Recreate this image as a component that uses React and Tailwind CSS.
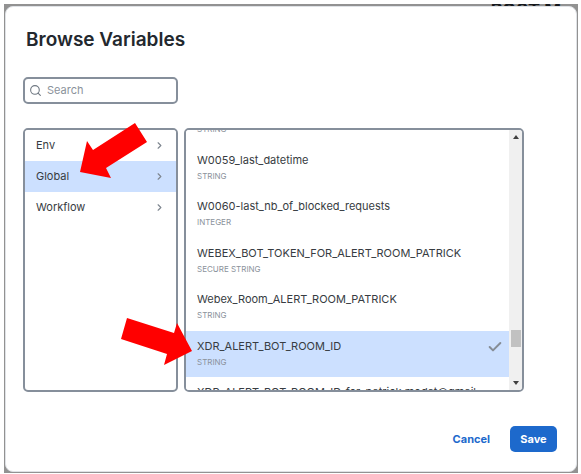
import { ChevronRight, Check, Search } from "lucide-react";

const scopes = [
  { name: "Env" },
  { name: "Global", selected: true },
  { name: "Workflow" },
];

const variables = [
  { name: "", type: "STRING" },
  { name: "W0059_last_datetime", type: "STRING" },
  { name: "W0060-last_nb_of_blocked_requests", type: "INTEGER" },
  { name: "WEBEX_BOT_TOKEN_FOR_ALERT_ROOM_PATRICK", type: "SECURE STRING" },
  { name: "Webex_Room_ALERT_ROOM_PATRICK", type: "STRING" },
  { name: "XDR_ALERT_BOT_ROOM_ID", type: "STRING", selected: true },
  { name: "XDR_ALERT_BOT_ROOM_ID_for_patrick.modat@gmail", type: "" },
];

function ScopeRow({ name, selected }) {
  return (
    <li>
      <button
        type="button"
        className={`flex h-[31px] w-full items-center justify-between px-[11px] text-[11px] text-[#373c42] ${
          selected ? "bg-[#cce0ff]" : "bg-white"
        }`}
      >
        {name}
        <ChevronRight size={11} strokeWidth={2.5} className="text-[#7e868f]" />
      </button>
    </li>
  );
}

function VariableRow({ name, type, selected }) {
  return (
    <li className="min-h-0">
      <button
        type="button"
        className={`flex h-full w-full items-start justify-between pt-2 pr-[6px] pl-[11px] text-left ${
          selected ? "bg-[#cce0ff]" : "bg-white"
        }`}
      >
        <span className="flex flex-col gap-[3px] whitespace-nowrap">
          <span className="min-h-[15px] text-[11px] leading-[15px] text-[#373c42]">{name}</span>
          <span className="text-[8px] leading-[10px] text-[#8b929b]">{type}</span>
        </span>
        {selected && <Check size={16} strokeWidth={3} className="text-[#868d96]" />}
      </button>
    </li>
  );
}

function ScrollBar() {
  return (
    <div className="flex w-[13px] shrink-0 flex-col items-center bg-[#f0f0f0] py-[5px]">
      <svg width="6" height="4" viewBox="0 0 6 4" fill="#404040">
        <path d="M0 4 3 0 6 4z" />
      </svg>
      <div className="grow" />
      <div className="h-[17px] w-[10px] bg-[#c1c1c1]" />
      <div className="h-[34px]" />
      <svg width="6" height="4" viewBox="0 0 6 4" fill="#404040">
        <path d="M0 0h6L3 4z" />
      </svg>
    </div>
  );
}

function Arrow({ className, points, width, height }) {
  return (
    <svg
      className={`pointer-events-none absolute ${className}`}
      width={width}
      height={height}
      viewBox={`0 0 ${width} ${height}`}
      aria-hidden="true"
    >
      <polygon points={points} fill="#ff0000" />
    </svg>
  );
}

export default function App() {
  return (
    <div className="min-h-screen bg-white pt-1 pr-[3px] pb-px pl-1 font-['Inter',sans-serif]">
      <div className="relative overflow-hidden bg-[#929292] px-px pt-[2px] pb-px">
        <span className="absolute -top-1 right-[17px] text-[18px] leading-5 font-bold whitespace-nowrap text-[#15181c]">
          POST M
        </span>
        <main
          role="dialog"
          aria-labelledby="title"
          className="relative rounded-lg border border-[#dfe2e6] bg-white px-[17px] pt-[21px] pb-[19px]"
        >
          <h1 id="title" className="px-[3px] text-[19px] leading-6 font-semibold text-[#23282e]">
            Browse Variables
          </h1>
          <label className="mt-[25px] flex h-[27px] w-[155px] items-center gap-[5px] rounded-[5px] border-2 border-[#868f9b] px-1">
            <Search size={13} strokeWidth={2} className="shrink-0 text-[#6f7882]" />
            <input
              type="text"
              aria-label="Search"
              placeholder="Search"
              className="w-full min-w-0 text-[11px] outline-none placeholder:text-[#8b929b]"
            />
          </label>
          <div className="relative mt-6 mr-[35px] flex h-[264px] gap-[6px]">
            <ul className="w-[155px] shrink-0 overflow-hidden rounded-[5px] border-2 border-[#868f9b]">
              {scopes.map((scope) => (
                <ScopeRow key={scope.name} {...scope} />
              ))}
            </ul>
            <div className="flex min-w-0 grow overflow-hidden rounded-[5px] border-2 border-[#868f9b]">
              <ul className="-mt-8 grid h-[326px] min-w-0 grow grid-rows-7">
                {variables.map((variable) => (
                  <VariableRow key={variable.name} {...variable} />
                ))}
              </ul>
              <ScrollBar />
            </div>
            <Arrow
              className="-top-[5px] left-[57px]"
              width={67}
              height={56}
              points="55,0 67,19 26,45 31,55 0,49 7,18 13,27"
            />
            <Arrow
              className="top-[189px] left-[97px]"
              width={73}
              height={49}
              points="7,1 54,16 57,6 72,34 44,48 47,37 1,22"
            />
          </div>
          <div className="mt-[34px] mr-[2px] flex items-center justify-end gap-5">
            <button type="button" className="text-[11px] leading-4 font-bold text-[#1d69cc]">
              Cancel
            </button>
            <button
              type="button"
              className="h-[26px] w-[47px] rounded-[5px] bg-[#1d69cc] text-[11px] leading-4 font-bold text-white"
            >
              Save
            </button>
          </div>
        </main>
      </div>
    </div>
  );
}
